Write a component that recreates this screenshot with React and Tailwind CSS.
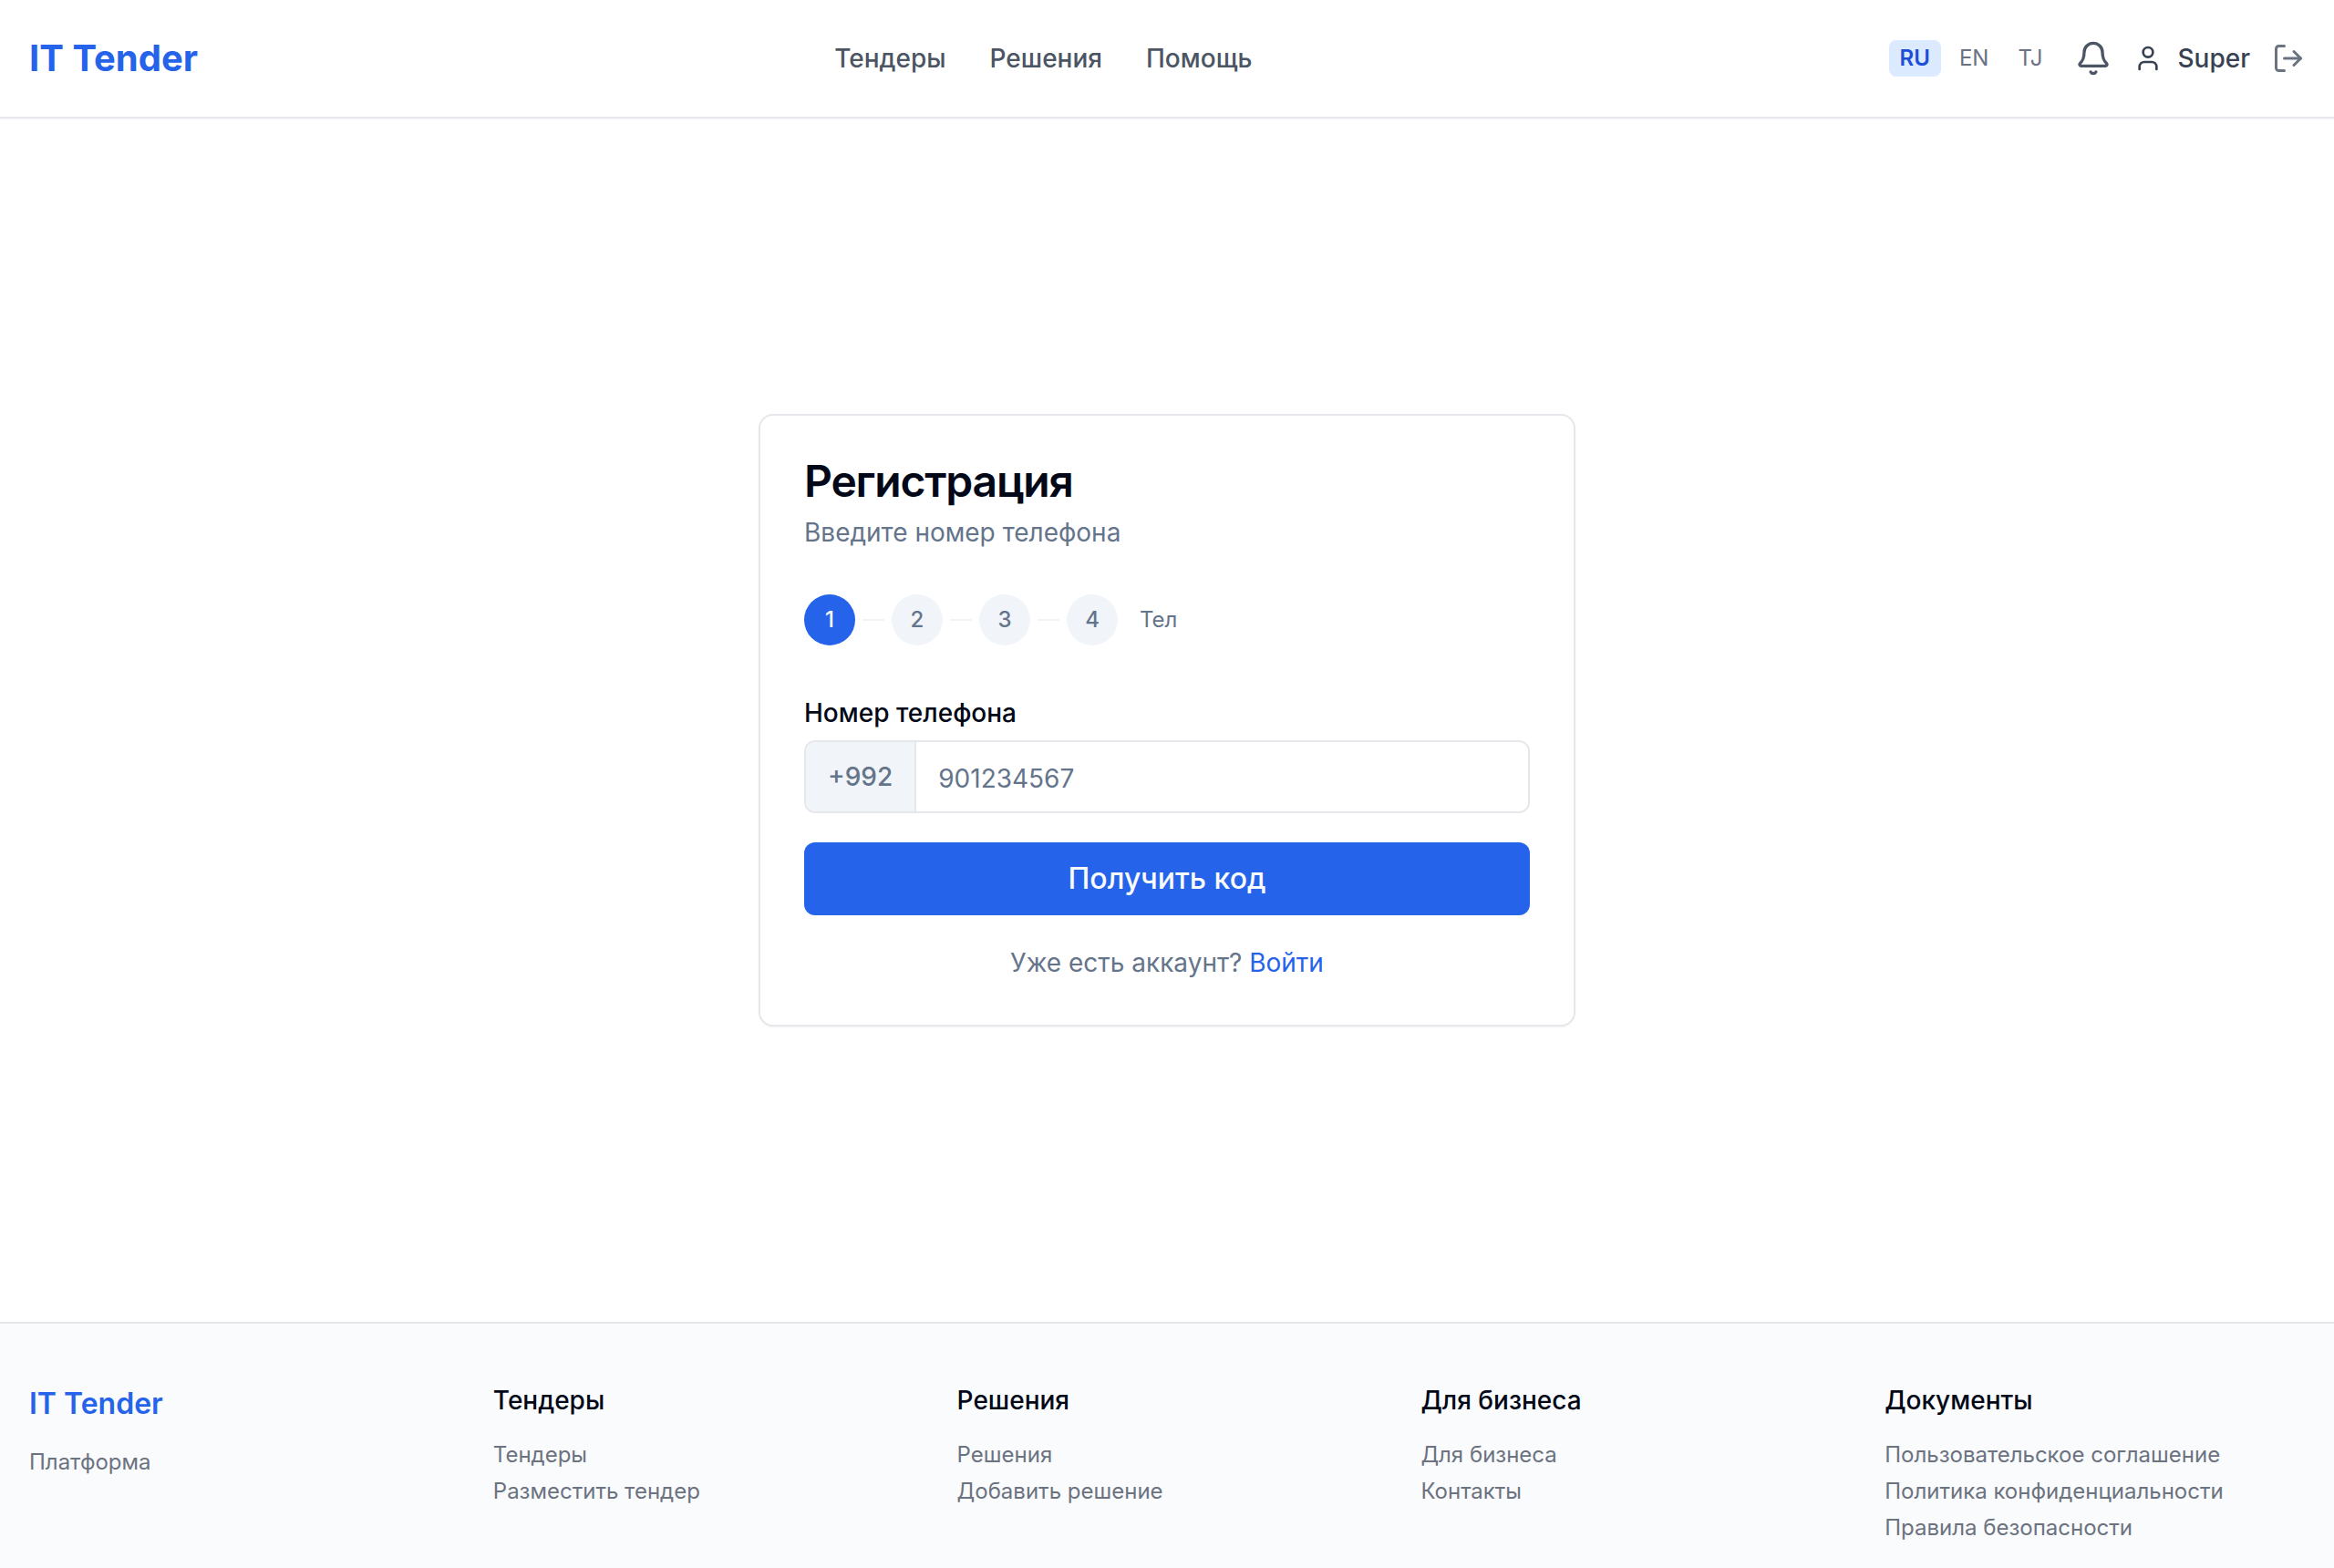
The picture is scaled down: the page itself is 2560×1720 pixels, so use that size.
import { useState } from "react";
import { Bell, LogOut, User } from "lucide-react";

const LANGUAGES = ["RU", "EN", "TJ"];

const NAV_LINKS = ["Тендеры", "Решения", "Помощь"];

const STEPS = [1, 2, 3, 4];

const FOOTER_COLUMNS = [
  { title: "Тендеры", links: ["Тендеры", "Разместить тендер"] },
  { title: "Решения", links: ["Решения", "Добавить решение"] },
  { title: "Для бизнеса", links: ["Для бизнеса", "Контакты"] },
  {
    title: "Документы",
    links: ["Пользовательское соглашение", "Политика конфиденциальности", "Правила безопасности"],
  },
];

const Header = () => {
  const [lang, setLang] = useState("RU");

  return (
    <header className="border-b-2 border-[#e5e7eb] bg-white shadow-xs">
      <div className="flex h-32 items-center justify-between px-8">
        <a href="#" className="text-[40px] leading-14 font-bold text-[#2563eb]">
          IT Tender
        </a>

        <nav className="flex items-center gap-12">
          {NAV_LINKS.map((label) => (
            <a key={label} href="#" className="text-[28px] leading-10 font-medium text-[#4b5563] hover:text-[#2563eb]">
              {label}
            </a>
          ))}
        </nav>

        <div className="flex items-center gap-6">
          <div className="flex items-center gap-2">
            {LANGUAGES.map((code) => (
              <button
                key={code}
                type="button"
                onClick={() => setLang(code)}
                className={`rounded-lg px-3 py-1 text-2xl leading-8 ${
                  lang === code ? "bg-[#dbeafe] font-semibold text-[#1d4ed8]" : "text-[#6b7280]"
                }`}
              >
                {code}
              </button>
            ))}
          </div>
          <button type="button" aria-label="Уведомления" className="text-[#4b5563]">
            <Bell className="size-10" />
          </button>
          <a href="#" className="flex items-center gap-4 text-[28px] leading-10 font-medium text-[#374151]">
            <User className="size-8" />
            Super
          </a>
          <button type="button" aria-label="Выйти" className="text-[#6b7280]">
            <LogOut className="size-9" />
          </button>
        </div>
      </div>
    </header>
  );
};

const StepIndicator = ({ current }) => (
  <div className="flex items-center gap-2">
    {STEPS.map((step) => (
      <div key={step} className="flex items-center gap-2">
        <div
          className={`flex size-14 items-center justify-center rounded-full text-2xl leading-8 font-medium ${
            step === current ? "bg-[#2563eb] text-[#f8fafc]" : "bg-[#f1f5f9] text-[#64748b]"
          }`}
        >
          {step}
        </div>
        {step < STEPS.length && <div className="h-0.5 w-6 bg-[#f1f5f9]" />}
      </div>
    ))}
    <span className="ml-4 text-2xl leading-8 text-[#64748b]">Тел</span>
  </div>
);

const RegisterCard = () => {
  const [phone, setPhone] = useState("");

  return (
    <div className="w-full max-w-4xl rounded-2xl border-2 border-[#e5e7eb] bg-white p-12 shadow-xs">
      <h1 className="text-5xl leading-12 font-semibold tracking-tight text-[#020817]">Регистрация</h1>
      <p className="mt-3 mb-12 text-[28px] leading-10 text-[#64748b]">Введите номер телефона</p>

      <StepIndicator current={1} />

      <form className="mt-15" onSubmit={(e) => e.preventDefault()}>
        <label htmlFor="phone" className="block text-[28px] leading-7 font-medium text-[#020817]">
          Номер телефона
        </label>
        <div className="mt-4 flex h-20 overflow-hidden rounded-xl border-2 border-[#e5e7eb]">
          <span className="flex items-center border-r-2 border-[#e5e7eb] bg-[#f1f5f9] px-6 text-[28px] leading-10 font-medium text-[#64748b]">
            +992
          </span>
          <input
            id="phone"
            type="tel"
            value={phone}
            onChange={(e) => setPhone(e.target.value)}
            placeholder="901234567"
            className="min-w-0 flex-1 bg-white px-6 pt-1 text-[28px] outline-none placeholder:text-[#64748b]"
          />
        </div>
        <button
          type="submit"
          className="mt-8 h-20 w-full rounded-xl bg-[#2563eb] text-[32px] leading-12 font-medium text-[#f8fafc]"
        >
          Получить код
        </button>
      </form>

      <p className="mt-8 text-center text-[28px] leading-10 text-[#64748b]">
        Уже есть аккаунт?{" "}
        <a href="#" className="text-[#2563eb] hover:underline">
          Войти
        </a>
      </p>
    </div>
  );
};

const Footer = () => (
  <footer className="border-t-2 border-[#e5e7eb] bg-[#fafbfd] px-8 pt-16 pb-7">
    <div className="grid grid-cols-5 gap-12">
      <div>
        <a href="#" className="block text-[32px] leading-12 font-semibold text-[#2563eb]">
          IT Tender
        </a>
        <p className="mt-6 text-2xl leading-8 text-[#6b7280]">Платформа</p>
      </div>
      {FOOTER_COLUMNS.map((column) => (
        <div key={column.title}>
          <h2 className="text-[28px] leading-10 font-medium text-[#020817]">{column.title}</h2>
          <ul className="mt-6 space-y-2 text-2xl leading-8 text-[#6b7280]">
            {column.links.map((link) => (
              <li key={link}>
                <a href="#" className="block hover:text-[#2563eb]">
                  {link}
                </a>
              </li>
            ))}
          </ul>
        </div>
      ))}
    </div>
  </footer>
);

const App = () => (
  <div className="flex min-h-screen flex-col bg-white font-['Inter',sans-serif]">
    <Header />
    <main className="flex flex-1 items-center justify-center px-8">
      <RegisterCard />
    </main>
    <Footer />
  </div>
);

export default App;
